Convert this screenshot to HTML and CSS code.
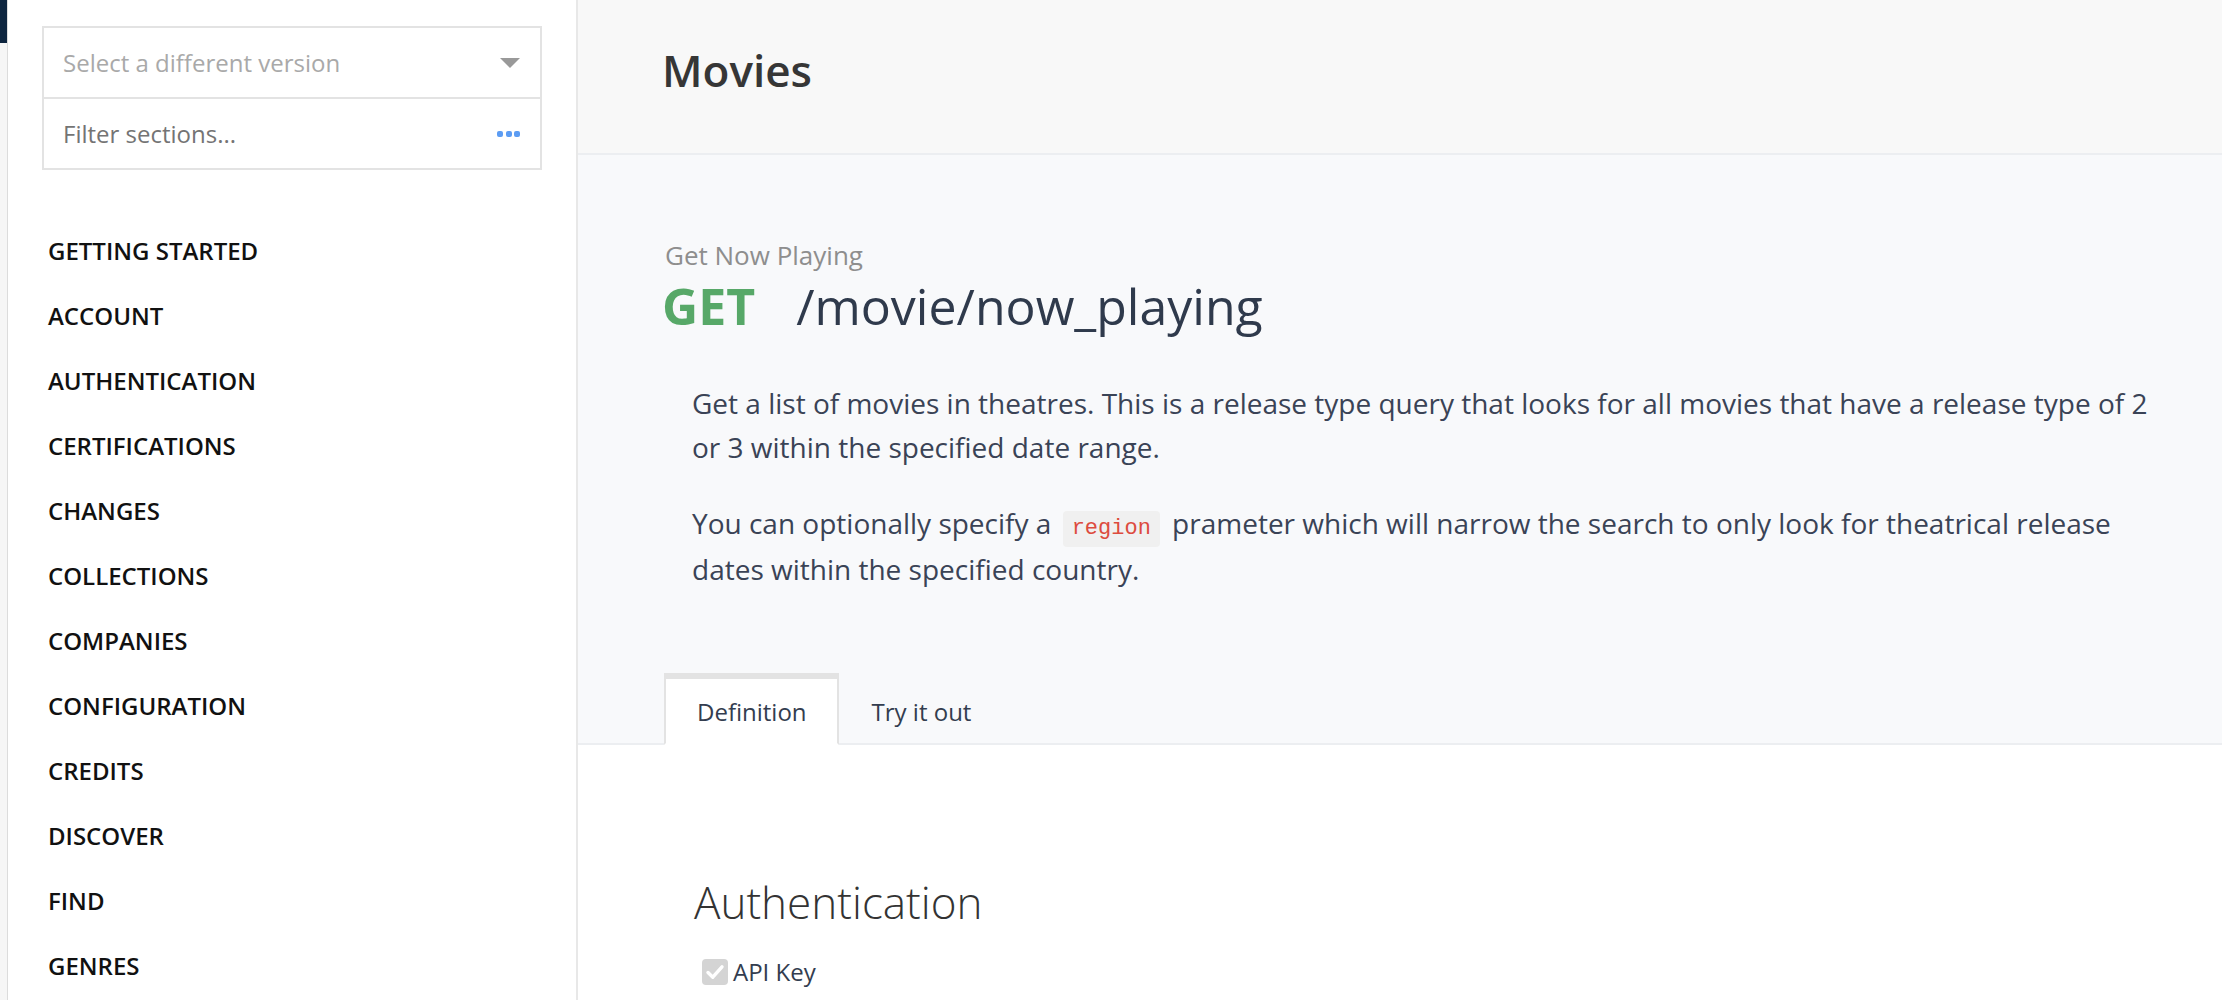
FILE: index.html
```html
<!DOCTYPE html>
<html lang="en">
<head>
    <meta charset="UTF-8">
    <meta name="viewport" content="width=device-width, initial-scale=1.0">
    <title>Movies - Get Now Playing</title>
    <link rel="stylesheet" href="styles.css">
</head>
<body>
    <div class="layout">
        <div class="rail">
            <div class="rail-logo"></div>
        </div>

        <aside class="sidebar">
            <div class="picker">
                <div class="picker-row">
                    <span class="picker-version">Select a different version</span>
                    <span class="caret"></span>
                </div>
                <div class="picker-row">
                    <span class="picker-filter">Filter sections...</span>
                    <span class="dots"><i></i><i></i><i></i></span>
                </div>
            </div>

            <ul class="nav">
                <li>GETTING STARTED</li>
                <li>ACCOUNT</li>
                <li>AUTHENTICATION</li>
                <li>CERTIFICATIONS</li>
                <li>CHANGES</li>
                <li>COLLECTIONS</li>
                <li>COMPANIES</li>
                <li>CONFIGURATION</li>
                <li>CREDITS</li>
                <li>DISCOVER</li>
                <li>FIND</li>
                <li>GENRES</li>
            </ul>
        </aside>

        <main class="content">
            <header class="page-header">
                <h1>Movies</h1>
            </header>

            <section class="endpoint">
                <div class="endpoint-name">Get Now Playing</div>
                <h2 class="endpoint-path"><span class="method">GET</span><span class="path">/movie/now_playing</span></h2>

                <div class="description">
                    <p>Get a list of movies in theatres. This is a release type query that looks for all movies that have a release type of 2 or 3 within the specified date range.</p>
                    <p>You can optionally specify a <code>region</code> prameter which will narrow the search to only look for theatrical release dates within the specified country.</p>
                </div>

                <div class="tabs">
                    <div class="tab active">Definition</div>
                    <div class="tab">Try it out</div>
                </div>
            </section>

            <section class="definition">
                <h3>Authentication</h3>
                <label class="auth-option">
                    <span class="checkbox">
                        <svg width="26" height="26" viewBox="0 0 26 26">
                            <rect x="0" y="0" width="26" height="26" rx="4" fill="#d4d4d4"/>
                            <path d="M6 13.5 L10.8 18.2 L20 7.8" fill="none" stroke="#ffffff" stroke-width="3.4" stroke-linecap="round" stroke-linejoin="round"/>
                        </svg>
                    </span>
                    API Key
                </label>
            </section>
        </main>
    </div>
</body>
</html>
```

FILE: styles.css
```css
body {
    margin: 0;
    font-family: 'Open Sans', 'Noto Sans', sans-serif;
    color: #333;
    background-color: #ffffff;
}

.layout {
    display: flex;
    height: 100vh;
    overflow: hidden;
}

/* thin left rail */
.rail {
    width: 7px;
    flex-shrink: 0;
    background-color: #f6f6f6;
    border-right: 1px solid #dcdcdc;
}

.rail-logo {
    height: 43px;
    background-color: #0d253f;
}

/* sidebar */
.sidebar {
    width: 570px;
    flex-shrink: 0;
    box-sizing: border-box;
    padding: 26px 0 0 34px;
    background-color: #ffffff;
    border-right: 2px solid #e8e8e8;
}

.picker {
    width: 500px;
    border: 2px solid #e3e3e3;
    box-sizing: border-box;
}

.picker-row {
    display: flex;
    align-items: center;
    justify-content: space-between;
    height: 69px;
    padding: 0 20px 0 19px;
    font-size: 24px;
    line-height: 32px;
}

.picker-row + .picker-row {
    border-top: 2px solid #e3e3e3;
}

.picker-version {
    color: #a9a9a9;
}

.picker-filter {
    color: #747474;
}

.caret {
    width: 0;
    height: 0;
    border-left: 10px solid transparent;
    border-right: 10px solid transparent;
    border-top: 10px solid #999999;
}

.dots {
    display: flex;
    gap: 2.5px;
}

.dots i {
    width: 6px;
    height: 6px;
    border-radius: 2px;
    background-color: #5c9cf3;
}

.nav {
    list-style: none;
    margin: 48px 0 0 0;
    padding: 0 0 0 6px;
}

.nav li {
    font-size: 24px;
    font-weight: 600;
    line-height: 65px;
    color: #111111;
}

/* main content */
.content {
    flex: 1;
    min-width: 0;
    background-color: #ffffff;
}

.page-header {
    height: 155px;
    box-sizing: border-box;
    padding: 40px 0 0 84px;
    background-color: #f8f8f8;
    border-bottom: 2px solid #eceef1;
}

.page-header h1 {
    margin: 0;
    font-size: 44px;
    font-weight: 600;
    line-height: 60px;
    color: #363636;
}

.endpoint {
    background-color: #f8f9fb;
    padding: 82px 0 0 84px;
    border-bottom: 2px solid #eceef1;
}

.endpoint-name {
    padding-left: 3px;
    font-size: 26px;
    line-height: 36px;
    color: #8e8e8e;
}

.endpoint-path {
    margin: 3px 0 0 0;
    font-size: 50px;
    line-height: 60px;
    font-weight: 400;
}

.method {
    font-weight: 700;
    color: #57a868;
    margin-right: 41px;
}

.path {
    color: #2f3a4c;
}

.description {
    margin: 45px 0 0 30px;
    width: 1476px;
}

.description p {
    margin: 0 0 32px 0;
    font-size: 28px;
    line-height: 44px;
    color: #3a4356;
}

.description p:last-child {
    margin-bottom: 0;
}

code {
    display: inline-block;
    font-family: 'Liberation Mono', 'DejaVu Sans Mono', monospace;
    font-size: 22px;
    line-height: 26px;
    color: #dd4b3e;
    background-color: #f0f0f0;
    border-radius: 4px;
    padding: 5px 9px;
    margin: 0 5px 0 4px;
}

.tabs {
    display: flex;
    margin: 82px 0 -2px 2px;
}

.tab {
    padding: 17px 30px 15px 31px;
    font-size: 24px;
    line-height: 32px;
    color: #333d4f;
    border-top: 6px solid transparent;
    border-left: 2px solid transparent;
    border-right: 2px solid transparent;
    border-bottom: 2px solid transparent;
}

.tab.active {
    background-color: #ffffff;
    border-top-color: #e3e3e3;
    border-left-color: #e3e3e3;
    border-right-color: #e3e3e3;
    border-bottom-color: #ffffff;
}

.definition {
    padding: 129px 0 0 116px;
}

.definition h3 {
    margin: 0;
    font-size: 44px;
    font-weight: 300;
    line-height: 56px;
    color: #333333;
}

.auth-option {
    display: flex;
    align-items: center;
    margin: 26px 0 0 8px;
    font-size: 24px;
    line-height: 32px;
    color: #333d4f;
}

.checkbox {
    display: flex;
    margin-right: 5px;
}
```
